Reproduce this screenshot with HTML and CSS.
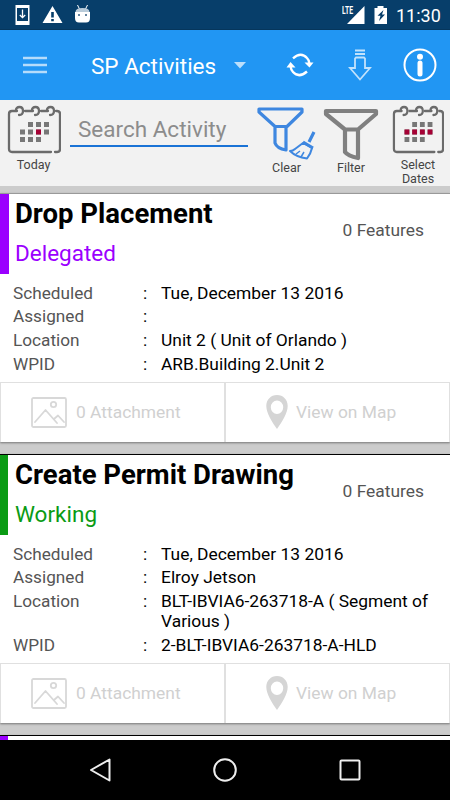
FILE: index.html
```html
<!DOCTYPE html>
<html lang="en">
<head>
<meta charset="utf-8">
<title>SP Activities</title>
<link rel="stylesheet" href="styles.css">
</head>
<body>
<svg class="defs" width="0" height="0" aria-hidden="true">
  <symbol id="calendar" viewBox="0 0 54 50" preserveAspectRatio="none">
    <g fill="none" stroke="#6b6b6b" stroke-width="2.300" stroke-linecap="round">
      <path d="M44 47H5Q2 47 2 44V9Q2 6 5 6H10M18 6H26M34 6H41M49 6H50Q53 6 53 9V44Q53 47 50 47H48"/>
      <path d="M9 5Q9 2 12.500 2Q16 2 16 6Q16 10 12 10M25 5Q25 2 28.500 2Q32 2 32 6Q32 10 28 10M40 5Q40 2 43.500 2Q47 2 47 6Q47 10 43 10"/>
    </g>
    <path fill="#777" d="M21 17h5v5h-5zM29 17h5v5h-5zM37 17h5v5h-5zM13 24.500h5v5h-5zM21 24.500h5v5h-5zM29 24.500h5v5h-5zM37 24.500h5v5h-5zM13 32h5v5h-5zM21 32h5v5h-5zM29 32h5v5h-5z"/>
  </symbol>
  <symbol id="calendar-day" viewBox="0 0 54 50" preserveAspectRatio="none">
    <path fill="#a50034" d="M29 24.500h5v5h-5z"/>
  </symbol>
  <symbol id="calendar-range" viewBox="0 0 54 50" preserveAspectRatio="none">
    <path fill="#a50034" d="M13 24.500h5v5h-5zM21 24.500h5v5h-5zM29 24.500h5v5h-5zM37 24.500h5v5h-5z"/>
  </symbol>
  <symbol id="picture" viewBox="0 0 36 31">
    <g fill="none" stroke="#d8d8d8" stroke-width="1.800" stroke-linejoin="round" stroke-linecap="round">
      <rect x="1" y="1" width="34" height="29" rx="1.500"/>
      <circle cx="22.500" cy="7.500" r="2.700"/>
      <path d="M4 25L14.500 13L26 26M23 22L27 18.500L33 25"/>
    </g>
  </symbol>
  <symbol id="pin" viewBox="0 0 22 34">
    <path fill="#d5d5d5" fill-rule="evenodd" d="M11 0C4.800 0 .3 4.700 .3 11C.3 18 6 27 11 34C16 27 21.700 18 21.700 11C21.700 4.700 17.200 0 11 0ZM11 5.500A6.200 6.700 0 1 1 11 18.900A6.200 6.700 0 1 1 11 5.500Z"/>
  </symbol>
</svg>
<div class="screen">
  <header class="status">
    <svg width="100" height="30" viewBox="0 0 100 30">
      <path fill="#fff" fill-rule="evenodd" d="M15.500 5h14v20h-14zM17 8v13h11V8z"/>
      <path fill="none" stroke="#fff" stroke-width="1.300" d="M22.500 9.500v8M19.800 15l2.700 2.700L25.200 15"/>
      <path fill="#fff" fill-rule="evenodd" d="M52.500 6L62.500 23H42.500ZM51.200 12v5.500h2.600V12zM51.200 19v2.300h2.600V19z"/>
      <path stroke="#fff" d="M77.500 5l2 4M87.500 5l-2 4"/>
      <path fill="#b9cbd9" d="M75.500 12Q75.500 8 82.500 8T89.500 12z"/>
      <path fill="#fff" d="M75 12h15v6q0 4.500-4 4.500h-7q-4 0-4-4.500z"/>
      <path fill="#6484a0" d="M78 14h2v2h-2zM85 14h2v2h-2z"/>
    </svg>
    <div class="signal">
      <span class="lte">LTE</span>
      <svg width="23" height="30" viewBox="0 0 23 30"><path fill="#fff" d="M21.500 6v18H4z"/></svg>
    </div>
    <svg class="battery" width="14" height="30" viewBox="0 0 14 30"><path fill="#fff" fill-rule="evenodd" d="M.5 8h3V6h6v2h3.500v16H.5zM9.500 10L3.500 15.800h3L5 21l6-6.500H8z"/></svg>
    <span class="clock">11:30</span>
  </header>
  <nav class="appbar">
    <svg class="menu" width="24" height="18" viewBox="0 0 24 18"><path stroke="#b5dcfb" stroke-width="2.500" d="M0 2h24M0 9h24M0 16h24"/></svg>
    <h1>SP Activities</h1>
    <svg class="caret" width="12" height="7" viewBox="0 0 12 7"><path fill="#bcdffb" d="M0 0h12L6 6.500z"/></svg>
    <svg class="refresh" width="28" height="24" viewBox="0 0 28 24">
      <g fill="none" stroke="#fff" stroke-width="2.400"><path d="M7 5.300Q15-1.500 21 5Q23 7 23.300 10"/><path d="M21 18.500Q13 25.500 7 19Q5 17 4.700 14"/></g>
      <path fill="#fff" d="M18.500 9.500H27.500L23.500 14.500zM.5 14.500H9.500L4.500 9z"/>
    </svg>
    <svg class="download" width="24" height="34" viewBox="0 0 24 34">
      <path fill="none" stroke="#c2e2fc" stroke-width="1.800" d="M7 2.500h10M7 6h10M8 9.500h8l1 1v9.500h5L12 31.500L2 20h5V10.500z"/>
    </svg>
    <svg class="info" width="34" height="34" viewBox="0 0 34 34">
      <circle cx="17" cy="17" r="15.500" fill="none" stroke="#fff" stroke-width="2"/>
      <circle cx="17" cy="8.700" r="3" fill="#fff"/>
      <rect x="14.500" y="12.500" width="5" height="16" rx="2.500" fill="#fff"/>
    </svg>
  </nav>
  <section class="tools">
    <div class="tool today">
      <svg width="54" height="50"><use href="#calendar"/><use href="#calendar-day"/></svg>
      <span>Today</span>
    </div>
    <div class="search">Search Activity</div>
    <div class="tool clear">
      <svg width="60" height="56" viewBox="0 0 60 56">
        <g fill="none" stroke="#3e87e0" stroke-width="3.200" stroke-linejoin="round">
          <path d="M2 4H45V7L30 21.500H18L2 7ZM18 21.500V38Q20 43.500 29 45V21.500"/>
          <path stroke-width="2" d="M46 38L38 44Q36 46 33 46Q39 52 50 53.500Q54 48 55 43Z"/>
          <path d="M57 27L52 37M46 37L56 43"/>
          <path stroke-width="1.500" d="M43 46l-4 3M47 47l-3 5"/>
        </g>
      </svg>
      <span>Clear</span>
    </div>
    <div class="tool filter">
      <svg width="56" height="56" viewBox="0 0 56 56"><path fill="none" stroke="#808080" stroke-width="4.200" stroke-linejoin="round" d="M3 6H53V9L35 24.500H22L3 9ZM22 24.500V47Q25 51 35 53V24.500"/></svg>
      <span>Filter</span>
    </div>
    <div class="tool dates">
      <svg width="52" height="50"><use href="#calendar"/><use href="#calendar-range"/></svg>
      <span>Select<br>Dates</span>
    </div>
  </section>
  <main>
    <article class="card first delegated">
      <div class="head">
        <div><h2>Drop Placement</h2><p class="state">Delegated</p></div>
        <span class="features">0 Features</span>
      </div>
      <dl>
        <dt>Scheduled</dt><dd>:</dd><dd>Tue, December 13 2016</dd>
        <dt>Assigned</dt><dd>:</dd><dd></dd>
        <dt>Location</dt><dd>:</dd><dd>Unit 2 ( Unit of Orlando )</dd>
        <dt>WPID</dt><dd>:</dd><dd>ARB.Building 2.Unit 2</dd>
      </dl>
      <div class="actions">
        <div class="action attach"><svg width="36" height="31"><use href="#picture"/></svg><span>0 Attachment</span></div>
        <div class="action map"><svg width="22" height="34"><use href="#pin"/></svg><span>View on Map</span></div>
      </div>
    </article>
    <article class="card working">
      <div class="head">
        <div><h2>Create Permit Drawing</h2><p class="state">Working</p></div>
        <span class="features">0 Features</span>
      </div>
      <dl>
        <dt>Scheduled</dt><dd>:</dd><dd>Tue, December 13 2016</dd>
        <dt>Assigned</dt><dd>:</dd><dd>Elroy Jetson</dd>
        <dt>Location</dt><dd>:</dd><dd>BLT-IBVIA6-263718-A ( Segment of Various )</dd>
        <dt>WPID</dt><dd>:</dd><dd>2-BLT-IBVIA6-263718-A-HLD</dd>
      </dl>
      <div class="actions">
        <div class="action attach"><svg width="36" height="31"><use href="#picture"/></svg><span>0 Attachment</span></div>
        <div class="action map"><svg width="22" height="34"><use href="#pin"/></svg><span>View on Map</span></div>
      </div>
    </article>
    <article class="card delegated"><div class="head"></div></article>
  </main>
  <footer class="navbar">
    <svg width="24" height="26" viewBox="0 0 24 26"><path d="M20.500 2.500v21L2 13z"/></svg>
    <svg width="26" height="26" viewBox="0 0 26 26"><circle cx="13" cy="13" r="10.800"/></svg>
    <svg width="24" height="26" viewBox="0 0 24 26"><rect x="2.500" y="3.500" width="19" height="19" rx="1"/></svg>
  </footer>
</div>
</body>
</html>
```
FILE: styles.css
```css
* { box-sizing: border-box; }
body, h1, h2, p, dl, dt, dd { margin: 0; }
body { font-family: Roboto, sans-serif; background: #ccc; overflow: hidden; }
svg { display: block; flex: none; }
.defs { position: absolute; }
.screen { width: 450px; height: 800px; display: flex; flex-direction: column; overflow: hidden; }

.status { height: 30px; flex: none; display: flex; background: #073e6a; border-bottom: 1px solid #06365c; color: #fff; }
.signal { margin-left: auto; position: relative; }
.lte { position: absolute; left: -1px; top: 5px; font: 700 10px/11px "Roboto", sans-serif; transform: scaleX(.68); transform-origin: left; }
.battery { margin-left: 8px; }
.clock { width: 54px; margin-left: 8px; font-size: 18px; line-height: 31px; white-space: nowrap; }

.appbar { height: 70px; flex: none; display: flex; align-items: center; background: #2196f3; color: #fff; padding-left: 23px; }
.appbar h1 { width: 126px; margin: 1px 0 0 44px; font-size: 22.500px; font-weight: 400; white-space: nowrap; }
.caret { margin-left: 17px; }
.refresh { margin-left: 40px; }
.download { margin-left: 34px; }
.info { margin-left: 31px; }

.tools { height: 86px; flex: none; display: flex; background: #f2f2f2; }
.tool { display: flex; flex-direction: column; align-items: center; font-size: 12.500px; line-height: 14px; color: #444; text-align: center; padding-top: 5px; }
.today { width: 67px; }
.today span, .dates span { margin-top: 3px; }
.search { width: 178px; height: 47px; margin-left: 3px; padding-left: 8px; border-bottom: 2px solid #1a73d6; font-size: 22.500px; line-height: 58px; color: #8c8c8c; white-space: nowrap; }
.clear { width: 60px; margin-left: 9px; }
.filter { width: 56px; margin-left: 6px; }
.clear span { margin-right: 1px; }
.dates { width: 54px; margin-left: 12px; }

main { flex: 1; min-height: 0; overflow: hidden; padding-top: 7px; }
.card { background: #fff; border-top: 1px solid #000; margin-bottom: 12px; box-shadow: 0 1px 2px #777; }
.card.first { border-top-color: #999; }
.head { height: 80px; display: flex; justify-content: space-between; border-left: 8px solid; padding: 0 26px 0 7px; }
.first .head { border-left-width: 9px; padding-left: 6px; }
.delegated .head { border-color: #9b00ff; }
.working .head { border-color: #0a9b14; }
.head h2 { margin-top: 3px; font-size: 27.500px; line-height: 34px; font-weight: 700; color: #000; white-space: nowrap; }
.state { margin-top: 8px; font-size: 22.500px; line-height: 28px; }
.delegated .state { color: #9b00ff; }
.working .state { color: #0a9b14; }
.features { margin-top: 25px; font-size: 17.400px; line-height: 22px; color: #555; white-space: nowrap; }
dl { display: grid; grid-template-columns: 130px 18px 280px; row-gap: 3.800px; padding: 8.600px 0 8px 13px; font-size: 17.400px; line-height: 20px; color: #000; }
dl > * { min-height: 20px; }
dt { font-size: 17.200px; color: #555; }
.actions { display: grid; grid-template-columns: 1fr 1fr; height: 60px; border: 1px solid #e0e0e0; border-bottom: 0; }
.action { display: flex; align-items: center; font-size: 17.400px; color: #d0d0d0; white-space: nowrap; }
.action + .action { border-left: 2px solid #e0e0e0; margin-left: -1px; }
.attach { padding-left: 30px; }
.attach span { margin-left: 9px; }
.map { padding-left: 40px; }
.map span { margin-left: 8px; }

.navbar { height: 60px; flex: none; display: flex; align-items: center; background: #000; padding-left: 89px; }
.navbar svg { fill: none; stroke: #eee; stroke-width: 2; stroke-linejoin: round; }
.navbar svg + svg { margin-left: 99px; }
.navbar svg:last-child { margin-left: 100px; }
```
